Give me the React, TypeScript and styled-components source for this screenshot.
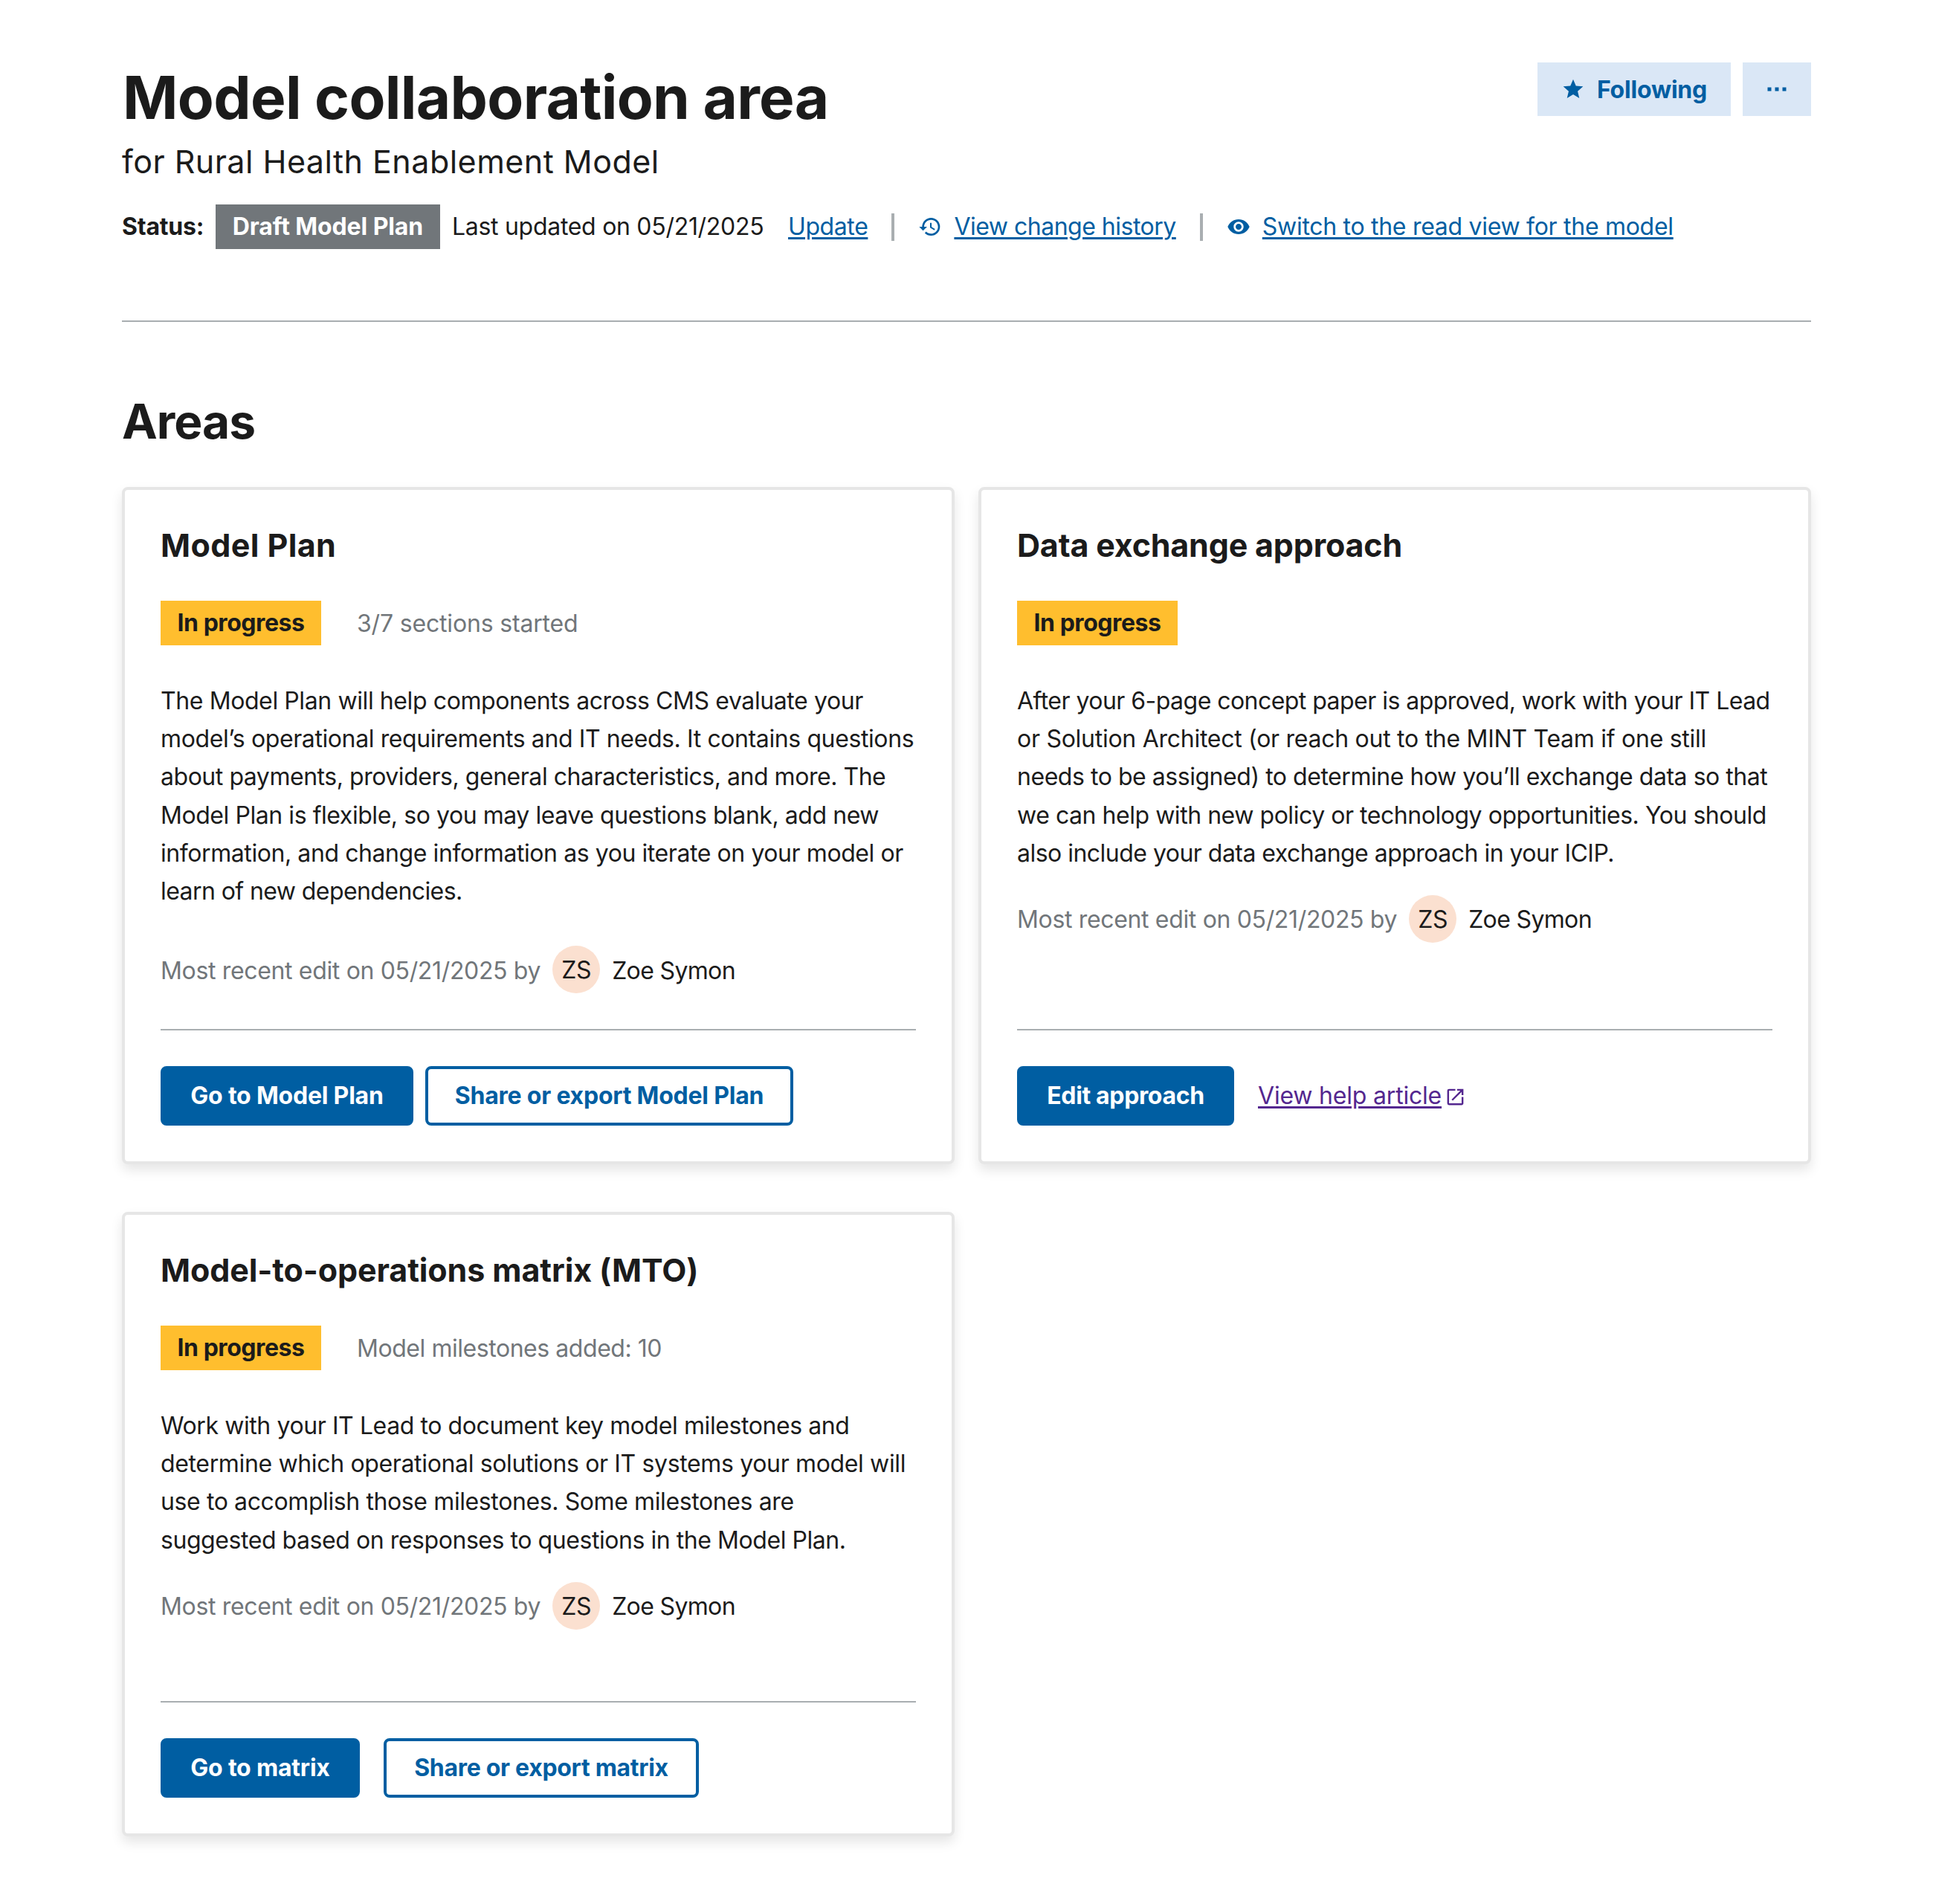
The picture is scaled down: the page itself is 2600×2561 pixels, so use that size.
import React from "react";
import styled, { createGlobalStyle, css } from "styled-components";

const GlobalStyle = createGlobalStyle`
  *, *::before, *::after { box-sizing: border-box; }
  html, body { margin: 0; background: #ffffff; }
  body {
    font-family: Inter, "Liberation Sans", sans-serif;
    font-size: 32px;
    line-height: 51.2px;
    color: #1b1b1b;
  }
  h1, h2, h3, p { margin: 0; }
`;

type Tracked = { $track?: number };

const tracking = css<Tracked>`
  letter-spacing: ${(p) => p.$track ?? 0}px;
`;

const Page = styled.main`
  width: 2600px;
  min-height: 2561px;
  padding: 84px 164px 0;
`;

const Header = styled.header`
  height: 349px;
  border-bottom: 2px solid #a9aeb1;
`;

const TitleRow = styled.div`
  display: flex;
  justify-content: space-between;
  align-items: flex-start;
`;

const Title = styled.h1`
  padding: 2px 0 0 1px;
  font-size: 80px;
  line-height: 90px;
  font-weight: 700;
  letter-spacing: -0.7px;
`;

const HeaderActions = styled.div`
  display: flex;
  gap: 16px;
`;

const SoftButton = styled.button<{ $width: number }>`
  display: flex;
  align-items: center;
  justify-content: center;
  width: ${(p) => p.$width}px;
  height: 72px;
  padding: 0;
  border: 0;
  background: #dae7f6;
  color: #005ea2;
  font: 700 32px/36px Inter, "Liberation Sans", sans-serif;
  letter-spacing: -0.2px;
`;

const ButtonText = styled.span`
  padding-top: 1px;
`;

const StarIcon = styled.svg`
  width: 32px;
  height: 32px;
  margin-right: 16px;
  fill: currentColor;
`;

const DotsIcon = styled.svg`
  width: 26px;
  height: 6px;
  fill: currentColor;
`;

const Subtitle = styled.p`
  margin-top: 13px;
  font-size: 43px;
  line-height: 56px;
  letter-spacing: 0.48px;
`;

const StatusRow = styled.div`
  display: flex;
  align-items: center;
  height: 60px;
  margin-top: 30px;
`;

const StatusLabel = styled.strong`
  width: 126px;
  letter-spacing: -0.2px;
  white-space: nowrap;
`;

const Tag = styled.span<{ $tone: "gray" | "gold"; $width: number }>`
  display: flex;
  align-items: center;
  justify-content: center;
  width: ${(p) => p.$width}px;
  height: 60px;
  font-weight: 700;
  white-space: nowrap;
  ${(p) =>
    p.$tone === "gray"
      ? css`background: #71767a; color: #ffffff; letter-spacing: -0.1px;`
      : css`background: #ffbe2e; color: #1b1b1b; letter-spacing: -0.45px;`}
`;

const Updated = styled.span`
  width: 452px;
  margin-left: 16px;
  letter-spacing: -0.29px;
  white-space: nowrap;
`;

const Link = styled.a<Tracked & { $visited?: boolean }>`
  color: ${(p) => (p.$visited ? "#54278f" : "#005ea2")};
  text-decoration: underline;
  text-decoration-thickness: 3px;
  text-underline-offset: 3px;
  white-space: nowrap;
  ${tracking}
`;

const Separator = styled.span`
  width: 4px;
  height: 37px;
  margin: 0 32px;
  background: #a9aeb1;
`;

const LinkIcon = styled.svg`
  width: 32px;
  height: 32px;
  margin-right: 16px;
  fill: #005ea2;
`;

const SectionTitle = styled.h2`
  margin-top: 98px;
  font-size: 64px;
  line-height: 72px;
  letter-spacing: -1px;
`;

const Cards = styled.div`
  display: grid;
  grid-template-columns: 1120px 1120px;
  column-gap: 32px;
  row-gap: 64px;
  margin-top: 52px;
`;

const Card = styled.section<{ $height: number }>`
  display: flex;
  flex-direction: column;
  height: ${(p) => p.$height}px;
  padding: 48px;
  border: 4px solid #e6e6e6;
  border-radius: 8px;
  background: #ffffff;
  box-shadow: 0 8px 16px rgba(0, 0, 0, 0.1);
`;

const CardTitle = styled.h3<Tracked>`
  font-size: 43px;
  line-height: 52px;
  ${tracking}
`;

const TagRow = styled.div`
  display: flex;
  align-items: center;
  gap: 48px;
  margin-top: 49px;
`;

const Muted = styled.span<Tracked>`
  padding-top: 2px;
  color: #71767a;
  white-space: nowrap;
  ${tracking}
`;

const Body = styled.p`
  display: flex;
  flex-direction: column;
  margin-top: 48px;
  padding-top: 1px;
`;

const Line = styled.span<Tracked>`
  white-space: nowrap;
  ${tracking}
`;

const EditRow = styled.div<{ $top: number }>`
  display: flex;
  align-items: center;
  height: 64px;
  margin-top: ${(p) => p.$top}px;
`;

const Avatar = styled.span`
  display: flex;
  align-items: center;
  justify-content: center;
  width: 64px;
  height: 64px;
  margin: 0 16px;
  padding-top: 1px;
  border-radius: 50%;
  background: #fbe0d0;
  letter-spacing: -0.4px;
`;

const Editor = styled.span`
  padding-top: 2px;
  letter-spacing: -0.65px;
`;

const CardFooter = styled.footer<{ $gap: number }>`
  display: flex;
  align-items: center;
  gap: ${(p) => p.$gap}px;
  margin-top: auto;
  padding-top: 48px;
  border-top: 2px solid #a9aeb1;
`;

const Button = styled.button<Tracked & { $outline?: boolean; $width: number }>`
  width: ${(p) => p.$width}px;
  height: 80px;
  padding: 0;
  border: 4px solid #005ea2;
  border-radius: 8px;
  background: ${(p) => (p.$outline ? "#ffffff" : "#005ea2")};
  color: ${(p) => (p.$outline ? "#005ea2" : "#ffffff")};
  font: 700 32px/36px Inter, "Liberation Sans", sans-serif;
  white-space: nowrap;
  ${tracking}
`;

const HelpLink = styled.span`
  display: flex;
  align-items: center;
`;

const ExternalIcon = styled.svg`
  width: 29px;
  height: 29px;
  margin: 4px 0 0 4px;
  fill: #54278f;
`;

function RecentEdit({ top }: { top: number }) {
  return (
    <EditRow $top={top}>
      <Muted $track={-0.34}>Most recent edit on 05/21/2025 by</Muted>
      <Avatar>ZS</Avatar>
      <Editor>Zoe Symon</Editor>
    </EditRow>
  );
}

type CopyLine = [text: string, track: number];

const modelPlanCopy: CopyLine[] = [
  ["The Model Plan will help components across CMS evaluate your", -0.4],
  ["model’s operational requirements and IT needs. It contains questions", -0.39],
  ["about payments, providers, general characteristics, and more. The", -0.46],
  ["Model Plan is flexible, so you may leave questions blank, add new", -0.44],
  ["information, and change information as you iterate on your model or", -0.42],
  ["learn of new dependencies.", -0.58],
];

const dataExchangeCopy: CopyLine[] = [
  ["After your 6-page concept paper is approved, work with your IT Lead", -0.54],
  ["or Solution Architect (or reach out to the MINT Team if one still", -0.27],
  ["needs to be assigned) to determine how you’ll exchange data so that", -0.46],
  ["we can help with new policy or technology opportunities. You should", -0.46],
  ["also include your data exchange approach in your ICIP.", -0.52],
];

const matrixCopy: CopyLine[] = [
  ["Work with your IT Lead to document key model milestones and", -0.41],
  ["determine which operational solutions or IT systems your model will", -0.35],
  ["use to accomplish those milestones. Some milestones are", -0.39],
  ["suggested based on responses to questions in the Model Plan.", -0.44],
];

function Copy({ lines }: { lines: CopyLine[] }) {
  return (
    <Body>
      {lines.map(([text, track]) => (
        <Line key={text} $track={track}>
          {text}
        </Line>
      ))}
    </Body>
  );
}

export default function App() {
  return (
    <Page>
      <GlobalStyle />
      <Header>
        <TitleRow>
          <Title>Model collaboration area</Title>
          <HeaderActions>
            <SoftButton $width={260}>
              <StarIcon viewBox="0 0 24 24">
                <path d="M12 17.27 18.18 21l-1.64-7.03L22 9.24l-7.19-.61L12 2 9.19 8.63 2 9.24l5.46 4.73L5.82 21z" />
              </StarIcon>
              <ButtonText>Following</ButtonText>
            </SoftButton>
            <SoftButton $width={92}>
              <DotsIcon viewBox="0 0 26 6">
                <path d="M0.500 0.500h5v5h-5zM10.500 0.500h5v5h-5zM20.500 0.500h5v5h-5z" />
              </DotsIcon>
            </SoftButton>
          </HeaderActions>
        </TitleRow>
        <Subtitle>for Rural Health Enablement Model</Subtitle>
        <StatusRow>
          <StatusLabel>Status:</StatusLabel>
          <Tag $tone="gray" $width={302}>Draft Model Plan</Tag>
          <Updated>Last updated on 05/21/2025</Updated>
          <Link $track={-0.4}>Update</Link>
          <Separator />
          <LinkIcon viewBox="0 0 24 24">
            <path d="M13 3a9 9 0 0 0-9 9H1l3.89 3.89.07.14L9 12H6c0-3.87 3.13-7 7-7s7 3.13 7 7-3.13 7-7 7c-1.93 0-3.68-.79-4.94-2.06l-1.42 1.42A8.954 8.954 0 0 0 13 21a9 9 0 0 0 0-18zm-1 5v5l4.28 2.54.72-1.21-3.5-2.08V8H12z" />
          </LinkIcon>
          <Link $track={-0.5}>View change history</Link>
          <Separator />
          <LinkIcon viewBox="0 0 24 24">
            <path d="M12 4.5C7 4.5 2.73 7.61 1 12c1.73 4.39 6 7.5 11 7.5s9.27-3.11 11-7.5c-1.73-4.39-6-7.5-11-7.5zM12 17c-2.76 0-5-2.24-5-5s2.24-5 5-5 5 2.24 5 5-2.24 5-5 5zm0-8c-1.66 0-3 1.34-3 3s1.34 3 3 3 3-1.34 3-3-1.34-3-3-3z" />
          </LinkIcon>
          <Link $track={-0.29}>Switch to the read view for the model</Link>
        </StatusRow>
      </Header>

      <SectionTitle>Areas</SectionTitle>
      <Cards>
        <Card $height={911}>
          <CardTitle $track={0.4}>Model Plan</CardTitle>
          <TagRow>
            <Tag $tone="gold" $width={216}>In progress</Tag>
            <Muted $track={-0.17}>3/7 sections started</Muted>
          </TagRow>
          <Copy lines={modelPlanCopy} />
          <RecentEdit top={48} />
          <CardFooter $gap={16}>
            <Button $track={-0.2} $width={340}>Go to Model Plan</Button>
            <Button $track={-0.22} $outline $width={495}>Share or export Model Plan</Button>
          </CardFooter>
        </Card>
        <Card $height={911}>
          <CardTitle $track={-0.19}>Data exchange approach</CardTitle>
          <TagRow>
            <Tag $tone="gold" $width={216}>In progress</Tag>
          </TagRow>
          <Copy lines={dataExchangeCopy} />
          <RecentEdit top={31} />
          <CardFooter $gap={32}>
            <Button $track={-0.35} $width={292}>Edit approach</Button>
            <HelpLink>
              <Link $track={-0.2} $visited>View help article</Link>
              <ExternalIcon viewBox="0 0 24 24">
                <path d="M19 19H5V5h7V3H5a2 2 0 0 0-2 2v14a2 2 0 0 0 2 2h14c1.1 0 2-.9 2-2v-7h-2v7zM14 3v2h3.590l-9.830 9.830 1.410 1.410L19 6.410V10h2V3h-7z" />
              </ExternalIcon>
            </HelpLink>
          </CardFooter>
        </Card>
        <Card $height={840}>
          <CardTitle $track={-0.11}>Model-to-operations matrix (MTO)</CardTitle>
          <TagRow>
            <Tag $tone="gold" $width={216}>In progress</Tag>
            <Muted $track={-0.45}>Model milestones added: 10</Muted>
          </TagRow>
          <Copy lines={matrixCopy} />
          <RecentEdit top={31} />
          <CardFooter $gap={32}>
            <Button $track={-0.2} $width={268}>Go to matrix</Button>
            <Button $track={-0.3} $outline $width={424}>Share or export matrix</Button>
          </CardFooter>
        </Card>
      </Cards>
    </Page>
  );
}
